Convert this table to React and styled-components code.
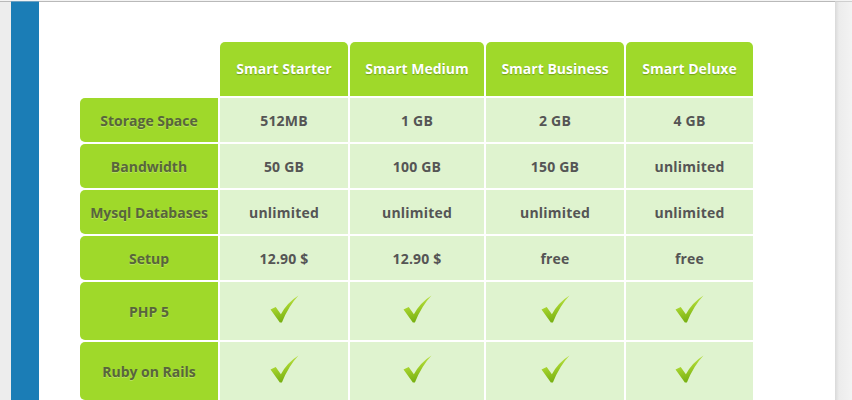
import React from "react";
import styled, { createGlobalStyle } from "styled-components";

const Global = createGlobalStyle`
  html, body { margin: 0; padding: 0; background: #ececec; }
  body { font-family: "Open Sans", "DejaVu Sans", sans-serif; }
`;

const Page = styled.div`
  display: flex;
  height: 400px;
  border-top: 1px solid #f4f4f4;
  overflow: hidden;
`;

const LeftGutter = styled.div`
  width: 11px;
  background: #ededed;
  border-top: 1px solid #b9b9b9;
`;

const BlueBar = styled.div`
  width: 28px;
  background: #1b7db6;
  border-top: 1px solid #6a9fc0;
`;

const Main = styled.main`
  width: 796px;
  background: #ffffff;
  border-top: 1px solid #b9b9b9;
  padding: 40px 0 0 41px;
  box-sizing: border-box;
`;

const RightStrip = styled.div`
  flex: 1;
  background: linear-gradient(to right, #d9d9d9 0px, #ececec 4px, #f3f3f3 100%);
  border-top: 1px solid #cfcfcf;
`;

const Grid = styled.div`
  display: grid;
  grid-template-columns: 138px 128px 134px 138px 127px;
  grid-template-rows: 54px 44px 44px 44px 44px 58px 58px;
  column-gap: 2px;
  row-gap: 2px;
`;

const Cell = styled.div`
  display: flex;
  align-items: center;
  justify-content: center;
  font-weight: 700;
  font-size: 14px;
  box-sizing: border-box;
`;

const Empty = styled.div``;

const Head = styled(Cell)`
  background: #9fd92a;
  color: #ffffff;
  border-radius: 5px 5px 0 0;
  padding-bottom: 2px;
  text-shadow: 0 1px 1px rgba(60, 90, 0, 0.45);
`;

const Label = styled(Cell)`
  background: #9fd92a;
  color: #58653c;
  border-radius: 5px 0 0 5px;
  text-shadow: 0 1px 0 rgba(255, 255, 255, 0.25);
`;

const Data = styled(Cell)`
  background: #dff3cf;
  color: #555555;
  letter-spacing: 0.2px;
  padding-bottom: ${(p) => (p.$check ? "5px" : "0")};
`;

const Check = () => (
  <svg width="29" height="28" viewBox="0 0 28 27">
    <defs>
      <linearGradient id="cg" x1="0" y1="0" x2="0.3" y2="1">
        <stop offset="0" stopColor="#d2ec6a" />
        <stop offset="0.5" stopColor="#a3d12c" />
        <stop offset="1" stopColor="#78b012" />
      </linearGradient>
    </defs>
    <path
      d="M0.5 14 L5.5 11.5 L10.5 18.5 Q17 7 27.5 0.5 Q18 10.5 11.5 26.5 L9.5 26.5 Z"
      fill="url(#cg)"
    />
  </svg>
);

const plans = ["Smart Starter", "Smart Medium", "Smart Business", "Smart Deluxe"];

const rows = [
  { label: "Storage Space", values: ["512MB", "1 GB", "2 GB", "4 GB"] },
  { label: "Bandwidth", values: ["50 GB", "100 GB", "150 GB", "unlimited"] },
  { label: "Mysql Databases", values: ["unlimited", "unlimited", "unlimited", "unlimited"] },
  { label: "Setup", values: ["12.90 $", "12.90 $", "free", "free"] },
  { label: "PHP 5", check: true },
  { label: "Ruby on Rails", check: true },
];

export default function App() {
  return (
    <>
      <Global />
      <Page>
        <LeftGutter />
        <BlueBar />
        <Main>
          <Grid>
            <Empty />
            {plans.map((p) => (
              <Head key={p}>{p}</Head>
            ))}
            {rows.map((r) => (
              <React.Fragment key={r.label}>
                <Label>{r.label}</Label>
                {r.check
                  ? plans.map((p) => (
                      <Data key={p} $check>
                        <Check />
                      </Data>
                    ))
                  : r.values.map((v, i) => <Data key={i}>{v}</Data>)}
              </React.Fragment>
            ))}
          </Grid>
        </Main>
        <RightStrip />
      </Page>
    </>
  );
}
